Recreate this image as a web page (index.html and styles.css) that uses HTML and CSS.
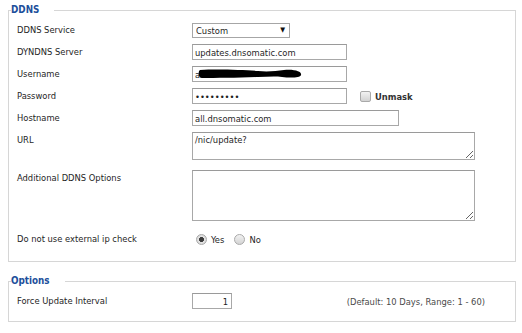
FILE: index.html
```html
<!DOCTYPE html>
<html>
<head>
<meta charset="utf-8">
<link rel="stylesheet" href="styles.css">
</head>
<body>
<fieldset class="group ddns">
  <legend>DDNS</legend>
  <div class="rows">
    <div class="row">
      <label class="lbl">DDNS Service</label>
      <div class="select-wrap">
        <select class="select"><option>Custom</option></select>
        <span class="arrow">▼</span>
      </div>
    </div>
    <div class="row">
      <label class="lbl">DYNDNS Server</label>
      <input class="txt w155" type="text" value="updates.dnsomatic.com">
    </div>
    <div class="row">
      <label class="lbl">Username</label>
      <div class="redact-wrap">
        <input class="txt w155" type="text" value="a">
        <svg class="blob" width="104" height="10" viewBox="0 0 104 10"><path d="M2 1 C20 0 45 1 60 2 C70 3 78 2 86 1 C98 0 104 3 103 6 C102 9 92 9 84 8 C76 7 68 8 60 8 C40 9 18 9 4 9 C0 9 0 2 2 1 Z" fill="#000"/></svg>
      </div>
    </div>
    <div class="row">
      <label class="lbl">Password</label>
      <input class="txt w155" type="password" value="123456789">
      <label class="unmask"><input class="chk" type="checkbox"><span>Unmask</span></label>
    </div>
    <div class="row">
      <label class="lbl">Hostname</label>
      <input class="txt w207" type="text" value="all.dnsomatic.com">
    </div>
    <div class="row top">
      <label class="lbl">URL</label>
      <textarea class="area h28">/nic/update?</textarea>
    </div>
    <div class="row top more">
      <label class="lbl">Additional DDNS Options</label>
      <textarea class="area h51"></textarea>
    </div>
    <div class="row radios-row">
      <label class="lbl">Do not use external ip check</label>
      <div class="radios">
        <label class="opt"><input class="rad" type="radio" name="ext" checked><span>Yes</span></label>
        <label class="opt"><input class="rad" type="radio" name="ext"><span>No</span></label>
      </div>
    </div>
  </div>
</fieldset>
<fieldset class="group options">
  <legend>Options</legend>
  <div class="rows">
    <div class="row">
      <label class="lbl">Force Update Interval</label>
      <input class="txt w40 num" type="text" value="1">
      <span class="hint">(Default: 10 Days, Range: 1 - 60)</span>
    </div>
  </div>
</fieldset>
</body>
</html>
```
FILE: styles.css
```css
html, body {
  margin: 0;
  padding: 0;
  background: #fff;
}
body {
  font-family: "DejaVu Sans Condensed", "DejaVu Sans", sans-serif;
  font-stretch: condensed;
  font-size: 9.3px;
  color: #1e1e1e;
  width: 522px;
  height: 333px;
  overflow: hidden;
}
.group {
  margin: 4px 6px 0 8px;
  border: 1px solid #d6d6d6;
  padding: 6px 0 14px 8px;
  min-width: 0;
}
.group.options {
  margin-top: 13px;
  padding-top: 6px;
  padding-bottom: 12px;
}
legend {
  margin-left: -6px;
  padding: 0 15px 0 0;
  background: #fff;
  font-weight: bold;
  font-size: 9.8px;
  line-height: 12px;
  color: #1d4f9b;
}
.rows {
  display: flex;
  flex-direction: column;
  gap: 6px;
}
.row {
  display: flex;
  align-items: center;
}
.row.top {
  align-items: flex-start;
}
.row.more {
  margin-top: 4px;
}
.row.radios-row {
  margin-top: 4px;
}
.lbl {
  width: 175px;
  flex: none;
  line-height: 16px;
}
.txt, .area, .select {
  font-family: inherit;
  font-stretch: condensed;
  font-size: 9.3px;
  color: #1e1e1e;
  box-sizing: border-box;
  border: 1px solid #a8a8a8;
  border-top-color: #9a9a9a;
  background: #fff;
  margin: 0;
  padding: 0 2px;
  outline: none;
}
.txt {
  height: 16px;
}
.w155 { width: 155px; }
.w207 { width: 207px; }
.w40 { width: 40px; }
.num { text-align: right; padding-right: 3px; }
.area {
  width: 283px;
  padding: 1px 2px;
  resize: both;
  line-height: 12px;
}
.h28 { height: 28px; }
.h51 { height: 51px; }
.select-wrap {
  position: relative;
  width: 98px;
  height: 15px;
}
.select {
  appearance: none;
  -webkit-appearance: none;
  width: 98px;
  height: 15px;
  padding: 0 3px;
  border-color: #a6a6a6;
  border-radius: 0;
  line-height: 13px;
}
.arrow {
  position: absolute;
  right: 5px;
  top: 2px;
  font-size: 7px;
  line-height: 11px;
  color: #111;
  pointer-events: none;
}
.redact-wrap {
  position: relative;
  height: 16px;
}
.blob {
  position: absolute;
  left: 6px;
  top: 3px;
}
.unmask {
  display: flex;
  align-items: center;
  margin-left: 13px;
  gap: 4px;
}
.chk, .rad {
  appearance: none;
  -webkit-appearance: none;
  margin: 0;
  width: 11px;
  height: 11px;
  border: 1px solid #a9a9a9;
  background: linear-gradient(#f2f2f2, #d3d3d3);
  box-sizing: border-box;
}
.chk {
  border-radius: 2px;
}
.unmask span {
  font-weight: 600;
  color: #333;
}
.radios {
  display: flex;
  align-items: center;
  gap: 10px;
  margin-left: 4px;
}
.opt {
  display: flex;
  align-items: center;
  gap: 4px;
}
.rad {
  border-radius: 50%;
}
.rad:checked {
  background: radial-gradient(circle, #3c3c3c 0 2.2px, #e4e4e4 2.8px, #cfcfcf 100%);
}
.hint {
  margin-left: auto;
  margin-right: 30px;
  color: #4a4a4a;
}
```
